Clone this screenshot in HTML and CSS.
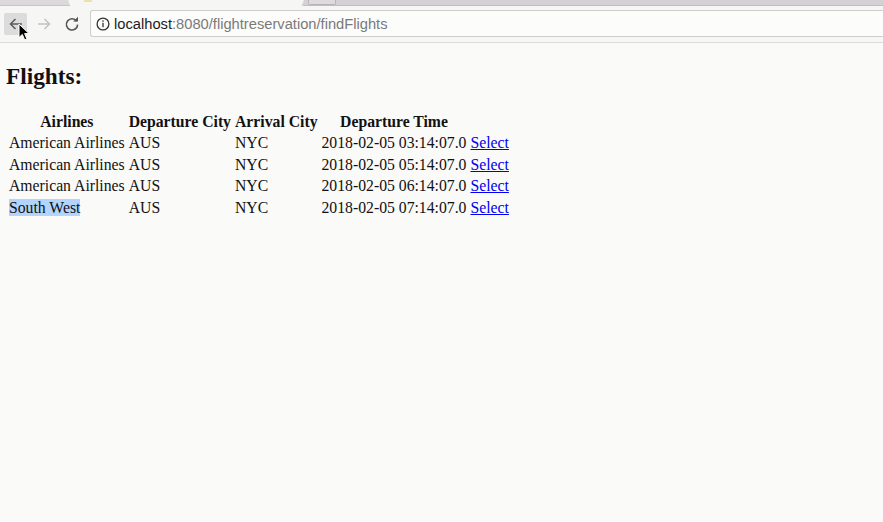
FILE: index.html
```html
<!DOCTYPE html>
<html lang="en">
<head>
<meta charset="utf-8">
<title>Flights</title>
<link rel="stylesheet" href="styles.css">
</head>
<body>
<div class="chrome">
  <div class="tabstrip">
    <div class="tab tab-left"></div>
    <div class="tab tab-active"><span class="favicon"></span></div>
    <div class="tab tab-next"><span class="tab-box"></span></div>
  </div>
  <div class="toolbar">
    <div class="navbtn navbtn-hover">
      <svg width="16" height="16" viewBox="0 0 16 16"><path d="M14 8H2.5M7.5 3L2.5 8l5 5" fill="none" stroke="#5a5a5a" stroke-width="1.5"/></svg>
    </div>
    <div class="navbtn">
      <svg width="16" height="16" viewBox="0 0 16 16"><path d="M2 8h11.5M8.5 3l5 5-5 5" fill="none" stroke="#c2c2c2" stroke-width="1.5"/></svg>
    </div>
    <div class="navbtn">
      <svg width="16" height="16" viewBox="0 0 16 16"><path d="M12.6 5.2A5.6 5.6 0 1 0 13.6 8.6" fill="none" stroke="#555" stroke-width="1.6"/><path d="M9.2 5.6H14V0.8z" fill="#555"/></svg>
    </div>
    <div class="omnibox">
      <svg class="info" width="14" height="14" viewBox="0 0 14 14"><circle cx="7" cy="7" r="5.9" fill="none" stroke="#333" stroke-width="1.3"/><rect x="6.35" y="5.8" width="1.3" height="4.4" fill="#333"/><circle cx="7" cy="4.1" r="0.8" fill="#333"/></svg>
      <span class="host">localhost</span><span class="path">:8080/flightreservation/findFlights</span>
    </div>
  </div>
  <svg class="cursor" width="13" height="18" viewBox="0 0 13 18"><path d="M1 1V14.5L4.3 11.4 6.7 16.8 8.9 15.9 6.6 10.6H11Z" fill="#000" stroke="#fff" stroke-width="1"/></svg>
</div>
<div class="page">
  <h2 class="title">Flights:</h2>
  <table class="flights">
    <tr><th>Airlines</th><th>Departure City</th><th>Arrival City</th><th>Departure Time</th></tr>
    <tr><td>American Airlines</td><td>AUS</td><td>NYC</td><td>2018-02-05 03:14:07.0</td><td><a href="#">Select</a></td></tr>
    <tr><td>American Airlines</td><td>AUS</td><td>NYC</td><td>2018-02-05 05:14:07.0</td><td><a href="#">Select</a></td></tr>
    <tr><td>American Airlines</td><td>AUS</td><td>NYC</td><td>2018-02-05 06:14:07.0</td><td><a href="#">Select</a></td></tr>
    <tr><td><span class="selected">South West</span></td><td>AUS</td><td>NYC</td><td>2018-02-05 07:14:07.0</td><td><a href="#">Select</a></td></tr>
  </table>
</div>
</body>
</html>
```
FILE: styles.css
```css
html, body {
  margin: 0;
  padding: 0;
  background: #fafaf9;
  overflow: hidden;
}
body {
  width: 883px;
  height: 522px;
}
.chrome {
  position: relative;
  font-family: "Liberation Sans", Arial, sans-serif;
}
.tabstrip {
  height: 6px;
  display: flex;
  background: #d5d0d5;
}
.tab-left {
  width: 70px;
  background: #dcd8dc;
  border-bottom: 1px solid #c9c4c9;
  box-sizing: border-box;
}
.tab-active {
  width: 236px;
  background: #f6f6f4;
  clip-path: polygon(0 0, 100% 0, 99% 100%, 1% 100%);
  margin-left: -2px;
  position: relative;
}
.favicon {
  display: block;
  margin-left: 16px;
  width: 8px;
  height: 2px;
  background: #e9e3a8;
}
.tab-next {
  flex: 1;
  background: #d5d0d5;
  border-bottom: 1px solid #c2bdc2;
  box-sizing: border-box;
}
.tab-box {
  display: block;
  margin-left: 4px;
  width: 26px;
  height: 4px;
  border: 1px solid #b9b4b9;
  border-top: none;
  border-radius: 0 0 2px 2px;
  background: #dedade;
}
.toolbar {
  height: 36px;
  display: flex;
  align-items: center;
  padding-left: 4px;
  gap: 5px;
  background: #f6f6f4;
  border-bottom: 1px solid #dcdcda;
}
.navbtn {
  width: 23px;
  height: 22px;
  display: flex;
  align-items: center;
  justify-content: center;
  border-radius: 2px;
}
.navbtn-hover {
  background: #dcdcdc;
}
.omnibox {
  margin-left: 2px;
  margin-top: -1px;
  flex: 1;
  height: 27px;
  box-sizing: border-box;
  border: 1px solid #cdcdcb;
  border-right: none;
  border-radius: 3px 0 0 3px;
  background: #fcfcfb;
  display: flex;
  align-items: center;
  padding-left: 5px;
  font-size: 14.7px;
  white-space: nowrap;
}
.info {
  margin-right: 4px;
}
.host {
  color: #1c1c1c;
}
.path {
  color: #7a7a7a;
}
.cursor {
  position: absolute;
  left: 18px;
  top: 23px;
}
.page {
  padding: 0 6px;
  font-family: "Liberation Serif", "Times New Roman", serif;
  color: #111;
}
.title {
  font-size: 23.3px;
  line-height: 27px;
  margin: 19.6px 0 20.4px;
  font-weight: bold;
}
.flights {
  font-size: 15.72px;
  line-height: 17.5px;
  border-spacing: 2px;
}
.flights th, .flights td {
  padding: 1px;
}
.flights td {
  text-align: left;
}
.flights a {
  color: #0000ee;
}
.selected {
  background: #b3d4fc;
}
```
